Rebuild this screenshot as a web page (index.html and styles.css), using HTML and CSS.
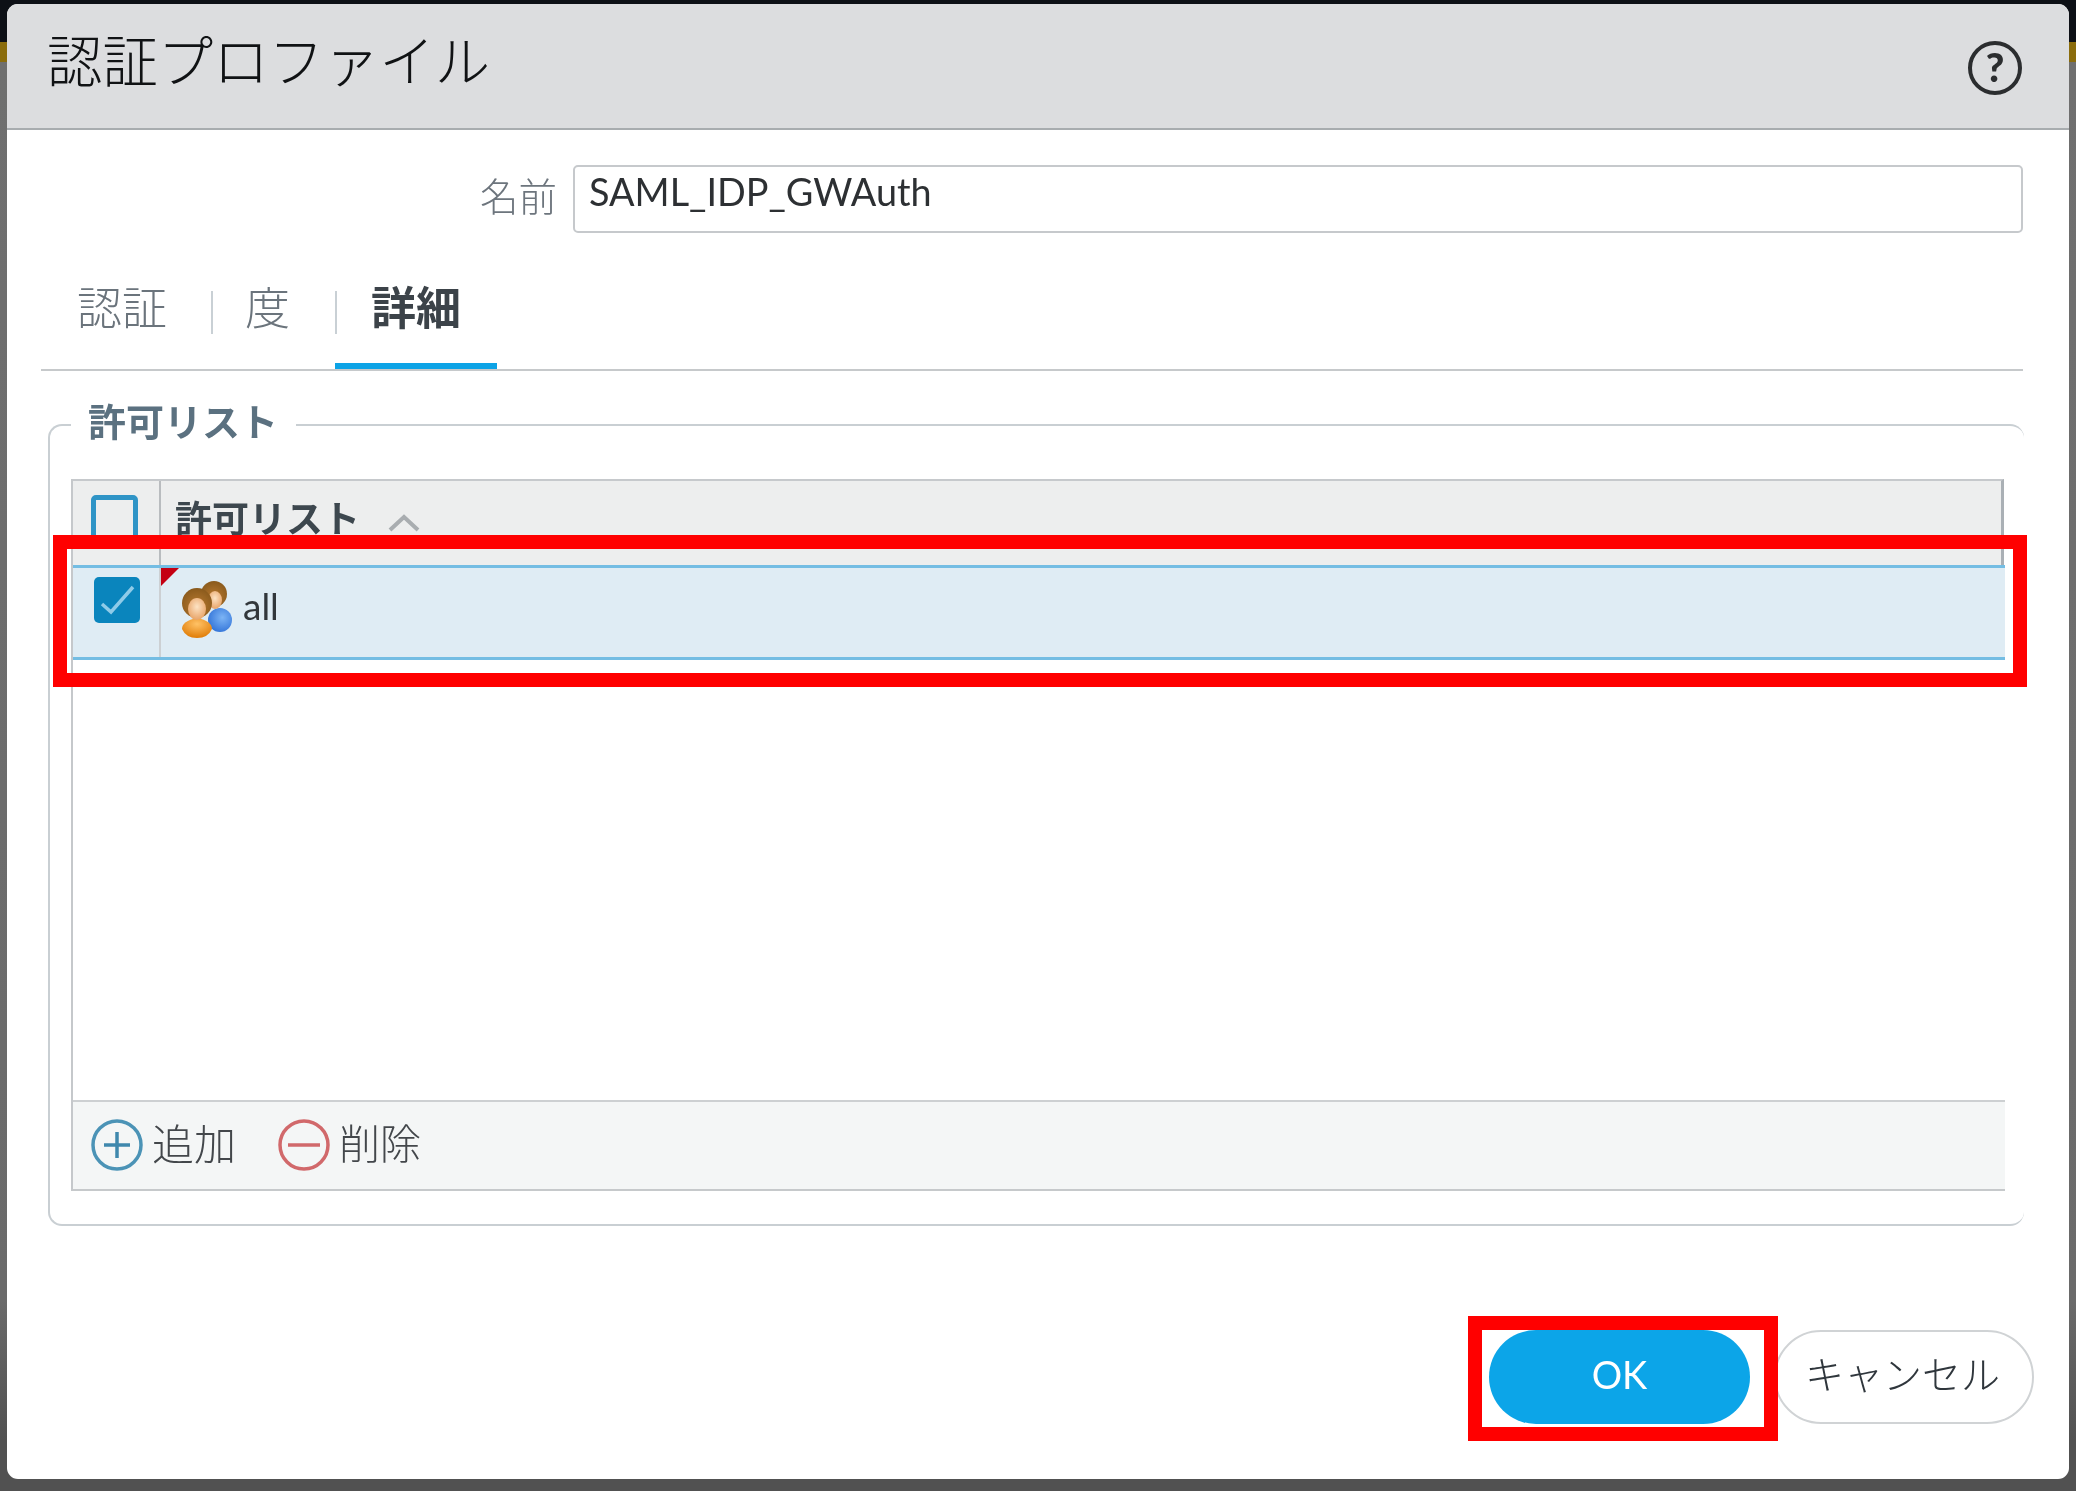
FILE: index.html
```html
<!DOCTYPE html>
<html lang="ja">
<head>
<meta charset="utf-8">
<title>認証プロファイル</title>
<link rel="stylesheet" href="styles.css">
</head>
<body>
<div class="dialog">
  <header class="dlg-head">
    <h1 class="dlg-title">認証プロファイル</h1>
    <span class="help">?</span>
  </header>
  <div class="name-row">
    <label class="name-label" for="n">名前</label>
    <input class="name-input" id="n" value="SAML_IDP_GWAuth">
  </div>
  <nav class="tabs">
    <span class="tab tab-first">認証</span>
    <span class="tab-sep sep-one"></span>
    <span class="tab tab-second">度</span>
    <span class="tab-sep sep-two"></span>
    <span class="tab tab-active">詳細</span>
  </nav>
  <fieldset class="group">
    <legend class="group-legend">許可リスト</legend>
    <div class="grid">
      <div class="grid-head">
        <div class="cell-check"><span class="box"></span></div>
        <div class="cell-name head-name">許可リスト
          <svg class="chev" width="32" height="18" viewBox="0 0 32 18"><path d="M2 16 16 3l14 13" fill="none" stroke="#a9adb0" stroke-width="4"/></svg>
        </div>
      </div>
      <div class="grid-row">
        <div class="cell-check row-check">
          <svg class="tick" width="46" height="46" viewBox="0 0 46 46"><rect width="46" height="46" rx="5" fill="#0a85bd"/><path d="M8 27l9 8L39 10" fill="none" stroke="#8fcbe8" stroke-width="3.500"/></svg>
        </div>
        <div class="cell-name row-name">
          <span class="flag"></span>
          <svg class="users" width="54" height="60" viewBox="0 0 54 60">
            <defs>
              <radialGradient id="hair" cx=".5" cy=".6" r=".6"><stop offset="0" stop-color="#b97a30"/><stop offset="1" stop-color="#8a5a1c"/></radialGradient>
              <radialGradient id="skin" cx=".5" cy=".4" r=".6"><stop offset="0" stop-color="#fde3c4"/><stop offset="1" stop-color="#e8a468"/></radialGradient>
              <radialGradient id="orange" cx=".5" cy=".3" r=".7"><stop offset="0" stop-color="#ffc266"/><stop offset="1" stop-color="#e07c06"/></radialGradient>
              <radialGradient id="blue" cx=".6" cy=".4" r=".7"><stop offset="0" stop-color="#7cb4f5"/><stop offset="1" stop-color="#2d6fd6"/></radialGradient>
            </defs>
            <ellipse cx="39" cy="40" rx="12" ry="12" fill="url(#blue)"/>
            <circle cx="33" cy="14" r="13" fill="url(#hair)"/>
            <ellipse cx="34" cy="20" rx="7" ry="9" fill="url(#skin)"/>
            <path d="M1 49q0-8 15-11 15 3 15 11-4 9-15 9T1 49z" fill="url(#orange)"/>
            <circle cx="16" cy="23" r="15" fill="url(#hair)"/>
            <ellipse cx="16" cy="29" rx="9" ry="11" fill="url(#skin)"/>
          </svg>
          <span class="row-text">all</span>
        </div>
      </div>
      <div class="grid-fill"></div>
      <div class="grid-foot">
        <span class="action">
          <svg width="52" height="52" viewBox="0 0 52 52"><circle cx="26" cy="26" r="24" fill="none" stroke="#4b93b6" stroke-width="3.500"/><path d="M26 13v26M13 26h26" stroke="#3f88ad" stroke-width="3.500"/></svg>
          追加
        </span>
        <span class="action action-del">
          <svg width="54" height="52" viewBox="0 0 54 52"><circle cx="27" cy="26" r="24" fill="none" stroke="#d1696b" stroke-width="3.500"/><path d="M11 26h32" stroke="#d1696b" stroke-width="3.500"/></svg>
          削除
        </span>
      </div>
    </div>
  </fieldset>
  <div class="dlg-foot">
    <button class="btn btn-ok">OK</button>
    <button class="btn btn-cancel">キャンセル</button>
  </div>
</div>
<div class="mark mark-row"></div>
<div class="mark mark-ok"></div>
</body>
</html>
```
FILE: styles.css
```css
* { box-sizing: border-box; }
html, body { margin: 0; height: 1491px; overflow: hidden; }
body {
  padding: 4px 7px 0;
  font-family: Lato, "Noto Sans CJK JP", sans-serif;
  background:
    linear-gradient(#0d1016 0 42px, #8a6c0c 42px 62px, #6f6f6f 62px, #6a6a6a 1300px, #515151 1440px);
}
.dialog {
  width: 2062px;
  height: 1475px;
  background: #fff;
  border-radius: 11px;
  display: flex;
  flex-direction: column;
  overflow: hidden;
  filter: blur(.6px);
}
.dlg-head {
  height: 126px;
  flex: none;
  background: #dcdddf;
  border-bottom: 2px solid #a8acaf;
  display: flex;
  align-items: center;
  justify-content: space-between;
  padding: 0 47px 0 40px;
}
.dlg-title {
  margin: 0 0 11px;
  font-size: 55.400px;
  line-height: 70px;
  font-weight: 300;
  color: #101214;
}
.help {
  width: 54px;
  height: 54px;
  margin-top: 3px;
  border: 4px solid #2b2d2f;
  border-radius: 50%;
  font: 900 40px/44px Lato, sans-serif;
  text-align: center;
  color: #2b2d2f;
}
.name-row {
  display: flex;
  justify-content: flex-end;
  align-items: center;
  margin-top: 35px;
  padding-right: 46px;
  gap: 16px;
}
.name-label {
  font-size: 38.500px;
  line-height: 50px;
  font-weight: 300;
  color: #6d757d;
  margin-bottom: 6px;
}
.name-input {
  width: 1450px;
  height: 68px;
  border: 2px solid #c6c9cc;
  border-radius: 5px;
  padding: 0 14px 15px;
  font: 400 37.800px Lato, sans-serif;
  color: #2d3033;
  background: #fff;
  outline: none;
}
.tabs {
  display: flex;
  height: 91px;
  margin: 47px 46px 0 34px;
  border-bottom: 2px solid #c6c9cb;
  flex: none;
}
.tab {
  font-size: 45px;
  line-height: 56px;
  font-weight: 300;
  color: #6b747c;
  height: 89px;
  white-space: nowrap;
}
.tab-first { margin-left: 36px; }
.tab-sep {
  width: 2px;
  height: 43px;
  margin-top: 11px;
  background: #c9d0d5;
}
.sep-one { margin-left: 44px; }
.tab-second { margin-left: 32px; }
.sep-two { margin-left: 45px; }
.tab-active {
  margin-left: -2px;
  padding: 0 0 0 36px;
  width: 162px;
  font-weight: 700;
  color: #3c4349;
  border-bottom: 6px solid #0ca3e6;
  border-radius: 4px 4px 0 0 / 3px 3px 0 0;
}
.group {
  margin: 29px 0 0 41px;
  width: 1976px;
  padding: 29px 19px 33px 21px;
  border: 2px solid #c9cfd3;
  border-right: 0;
  border-radius: 14px;
  min-width: 0;
}
.group-legend {
  margin-left: 0;
  padding: 0 18px 8px 17px;
  font-size: 38px;
  line-height: 42px;
  font-weight: 700;
  color: #5b7180;
}
.grid {
  height: 712px;
  display: flex;
  flex-direction: column;
  border-left: 2px solid #c5c8cb;
}
.grid-head {
  flex: none;
  height: 86px;
  margin-right: 1px;
  background: #edeeee;
  border-top: 2px solid #c6c9cc;
  border-right: 3px solid #aab0b5;
  display: flex;
}
.cell-check { width: 86px; flex: none; }
.cell-check .box {
  display: block;
  width: 47px;
  height: 47px;
  margin: 14px 0 0 18px;
  border: 5px solid #2f94c6;
  border-radius: 5px;
}
.cell-name { flex: 1; border-left: 2px solid #b9bcbf; }
.head-name {
  display: flex;
  align-items: center;
  font-size: 37px;
  line-height: 44px;
  font-weight: 700;
  color: #3d474e;
  padding: 0 0 9px 14px;
  white-space: nowrap;
}
.chev { margin-left: 28px; margin-top: 9px; }
.grid-row {
  flex: none;
  height: 95px;
  background: #dfecf4;
  border-top: 3px solid #74bde3;
  border-bottom: 3px solid #74bde3;
  display: flex;
}
.row-check { padding: 9px 0 0 21px; }
.tick { display: block; }
.row-name {
  position: relative;
  border-left-color: #ccd0d3;
  display: flex;
  align-items: flex-start;
  padding: 12px 0 0 20px;
}
.flag {
  position: absolute;
  left: 0;
  top: 0;
  width: 0;
  height: 0;
  border-top: 18px solid #c40012;
  border-right: 18px solid transparent;
}
.users { flex: none; display: block; }
.row-text {
  font-size: 37px;
  line-height: 46px;
  color: #32373b;
  margin: 3px 0 0 8px;
}
.grid-fill { flex: 1; }
.grid-foot {
  flex: none;
  height: 91px;
  background: #f4f6f6;
  border-top: 2px solid #cdd0d2;
  border-bottom: 2px solid #c6c9cb;
  display: flex;
  align-items: center;
  padding-left: 18px;
  gap: 41px;
}
.action {
  display: flex;
  align-items: center;
  gap: 9px;
  font-size: 42px;
  line-height: 52px;
  font-weight: 300;
  color: #43474b;
  padding-bottom: 3px;
}
.action-del { gap: 8px; font-size: 41px; }
.action svg { margin-top: 1px; }
.dlg-foot {
  display: flex;
  justify-content: flex-end;
  gap: 24px;
  margin-top: 104px;
  padding-right: 35px;
}
.btn {
  height: 94px;
  border-radius: 47px;
  font-family: Lato, "Noto Sans CJK JP", sans-serif;
  padding: 0 0 6px;
}
.btn-ok {
  width: 261px;
  border: 0;
  background: #0ca5e8;
  color: #fff;
  font-size: 38px;
}
.btn-cancel {
  width: 260px;
  border: 2px solid #d0d3d5;
  background: #fff;
  color: #2f363c;
  font-size: 39px;
  font-weight: 300;
  padding-bottom: 11px;
  padding-right: 3px;
}
.mark {
  position: absolute;
  border: 14px solid #f00;
}
.mark-row { left: 53px; top: 535px; width: 1974px; height: 152px; }
.mark-ok { left: 1468px; top: 1316px; width: 310px; height: 125px; }
```
